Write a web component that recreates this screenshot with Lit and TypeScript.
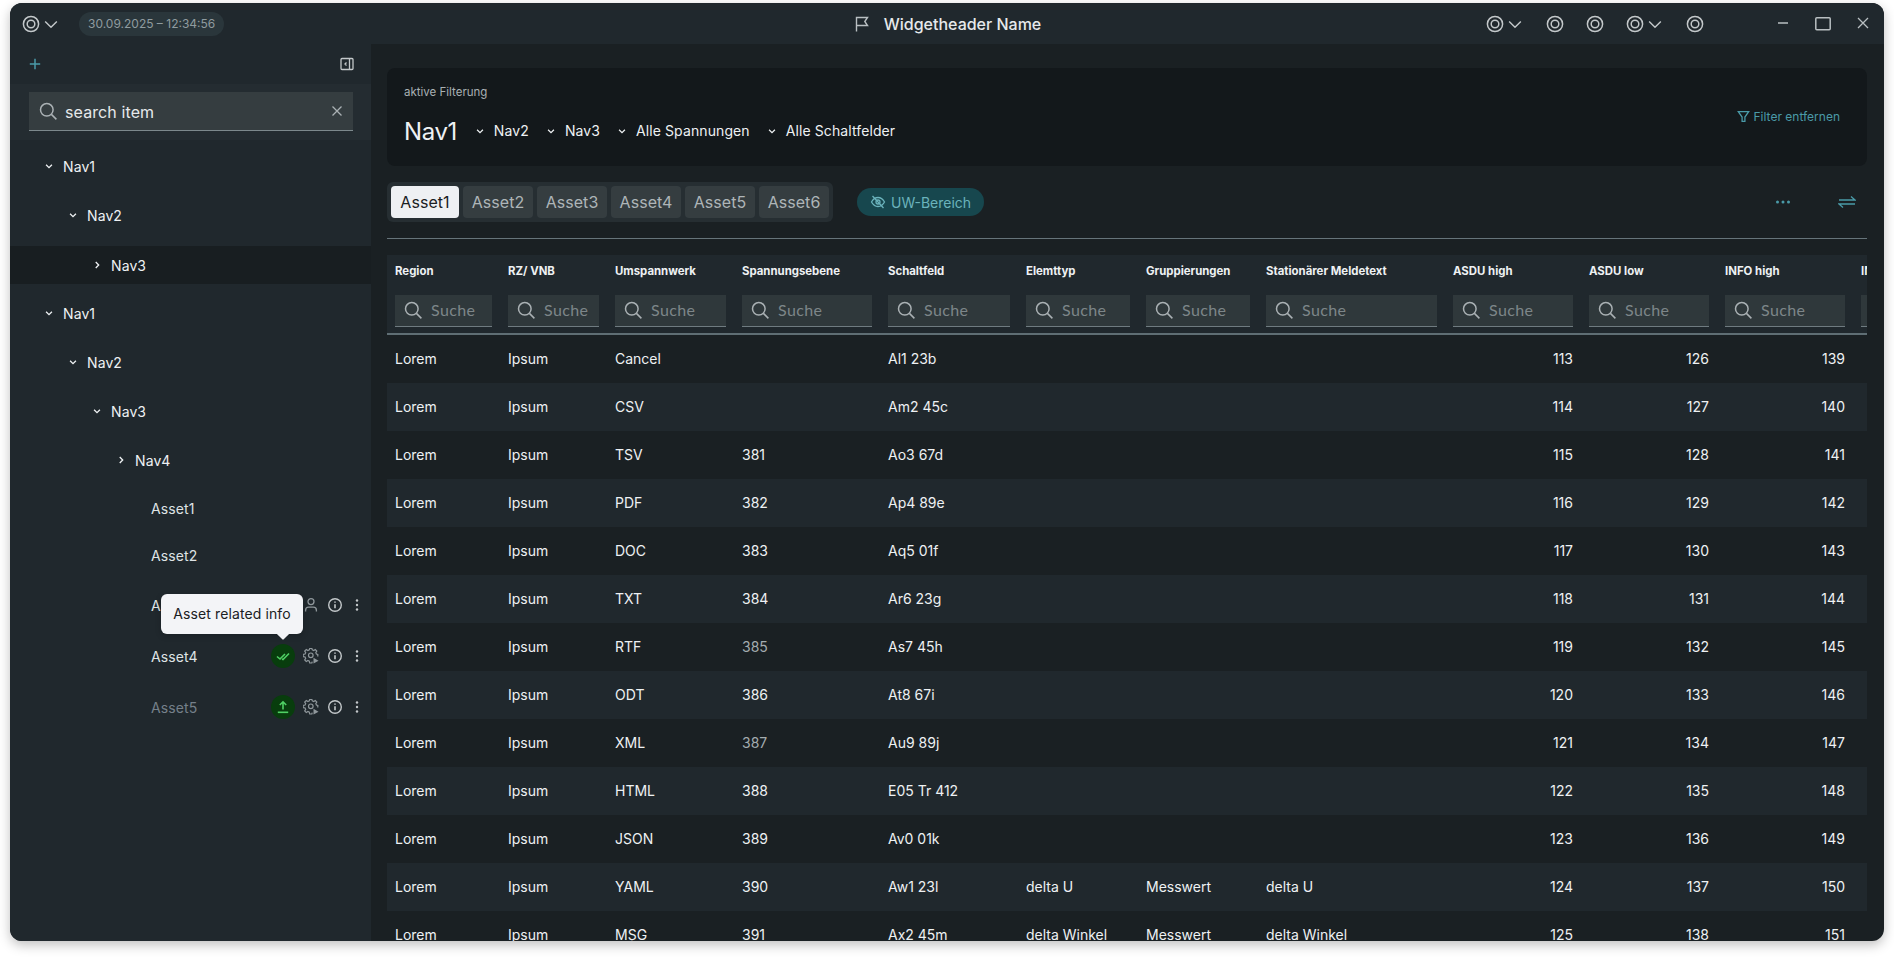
import { LitElement, html, css } from "lit";
import { customElement } from "lit/decorators.js";

const target = (s = 24) => html`<svg class="ico" width=${s} height=${s} viewBox="0 0 24 24" fill="none" stroke="currentColor" stroke-width="1.5"><circle cx="12" cy="12" r="7.6"/><circle cx="12" cy="12" r="3.8"/></svg>`;
const chevD = (s = 12, w = 1.5) => html`<svg class="ico" width=${s} height=${s} viewBox="0 0 12 12" fill="none" stroke="currentColor" stroke-width=${w}><path d="M2.5 4.5 6 8l3.5-3.5"/></svg>`;
const chevR = (s = 12, w = 1.5) => html`<svg class="ico" width=${s} height=${s} viewBox="0 0 12 12" fill="none" stroke="currentColor" stroke-width=${w}><path d="M4.5 2.5 8 6l-3.5 3.5"/></svg>`;
const search = (s = 20) => html`<svg class="ico" width=${s} height=${s} viewBox="0 0 20 20" fill="none" stroke="currentColor" stroke-width="1.5"><circle cx="8.8" cy="8.8" r="6.3"/><path d="m13.4 13.4 5 5"/></svg>`;
const info = html`<svg class="ico" width="16" height="16" viewBox="0 0 16 16" fill="none" stroke="currentColor" stroke-width="1.4"><circle cx="8" cy="8" r="6.3"/><path d="M8 7.2v4" stroke-width="1.6"/><path d="M8 4.4v1.4" stroke-width="1.6"/></svg>`;
const dots = html`<svg class="ico" width="12" height="16" viewBox="0 0 12 16" fill="currentColor"><circle cx="6" cy="3.5" r="1.2"/><circle cx="6" cy="8" r="1.2"/><circle cx="6" cy="12.5" r="1.2"/></svg>`;
const person = html`<svg class="ico" width="16" height="16" viewBox="0 0 16 16" fill="none" stroke="currentColor" stroke-width="1.3"><circle cx="8" cy="4.6" r="3"/><path d="M2.6 14.4v-1.2a3 3 0 0 1 3-3h4.8a3 3 0 0 1 3 3v1.2"/></svg>`;
const gear = html`<svg class="ico" width="16" height="16" viewBox="0 0 16 16" fill="none" stroke="currentColor" stroke-width="1.2"><path d="M9.2 13.6 8.9 15H6.700l-.4-1.900-1.400-.6-1.600 1L1.700 12l1-1.600-.6-1.400L.2 8.600V6.400l1.900-.4.600-1.400-1-1.600L3.300 1.500l1.600 1 1.400-.6.400-1.400h2.200l.4 1.400 1.400.6 1.600-1 1.500 1.500-1 1.600.6 1.400 1.400.4v2"/><circle cx="7.800" cy="7.300" r="2.300"/><path d="M10.500 9.800v5.800l5-2.900z" fill="currentColor" stroke="none"/></svg>`;
const checks = html`<svg class="ico" width="14" height="14" viewBox="0 0 14 14" fill="none" stroke="currentColor" stroke-width="1.6"><path d="m1 7.500 3 2.500 5-5"/><path d="m6 10 1 .5 6-6"/></svg>`;
const upload = html`<svg class="ico" width="14" height="14" viewBox="0 0 14 14" fill="none" stroke="currentColor" stroke-width="1.6"><path d="M7 9.500V2M3.800 5 7 1.800 10.200 5"/><path d="M1.800 12.300h10.400"/></svg>`;
const flag = html`<svg class="ico" width="18" height="18" viewBox="0 0 18 18" fill="none" stroke="currentColor" stroke-width="1.4"><path d="M3.500 16.500V2.500h11l-2.700 4 2.700 4h-11"/></svg>`;
const eyeOff = html`<svg class="ico" width="16" height="16" viewBox="0 0 16 16" fill="none" stroke="currentColor" stroke-width="1.3"><path d="M1.500 8S4 3.500 8 3.500 14.500 8 14.500 8 12 12.500 8 12.500 1.500 8 1.500 8z"/><circle cx="8" cy="8" r="2"/><path d="m2.500 2 11 12"/></svg>`;
const funnel = html`<svg class="ico" width="13" height="13" viewBox="0 0 12 12" fill="none" stroke="currentColor" stroke-width="1.200"><path d="M1.200 1.500h9.600L7.300 6.500v4H4.700v-4z"/></svg>`;

type Tree = { label: string; depth: number; open?: boolean; sel?: boolean };
const tree: Tree[] = [
  { label: "Nav1", depth: 0, open: true },
  { label: "Nav2", depth: 1, open: true },
  { label: "Nav3", depth: 2, sel: true },
  { label: "Nav1", depth: 0, open: true },
  { label: "Nav2", depth: 1, open: true },
  { label: "Nav3", depth: 2, open: true },
  { label: "Nav4", depth: 3 },
];
const cols = [
  ["Region", 113], ["RZ/ VNB", 107], ["Umspannwerk", 127], ["Spannungsebene", 146], ["Schaltfeld", 138],
  ["Elemttyp", 120], ["Gruppierungen", 120], ["Stationärer Meldetext", 187], ["ASDU high", 136], ["ASDU low", 136], ["INFO high", 136], ["INFO low", 136],
] as [string, number][];
const grid = cols.map((c) => c[1] + "px").join(" ");
const types = ["Cancel", "CSV", "TSV", "PDF", "DOC", "TXT", "RTF", "ODT", "XML", "HTML", "JSON", "YAML", "MSG"];
const felder = ["Al1 23b", "Am2 45c", "Ao3 67d", "Ap4 89e", "Aq5 01f", "Ar6 23g", "As7 45h", "At8 67i", "Au9 89j", "E05 Tr 412", "Av0 01k", "Aw1 23l", "Ax2 45m"];
const dimV = new Set([6, 8]);

@customElement("app-root")
export class AppRoot extends LitElement {
  static styles = css`
    :host { display: block; height: 958px; background: #fff; padding: 3px 10px 0; box-sizing: border-box; font-family: Inter, "Liberation Sans", sans-serif; color: #eef1f3; overflow: hidden; }
    * { box-sizing: border-box; }
    .ico { display: block; flex: none; }
    .win { width: 1874px; height: 938px; border-radius: 12px; overflow: hidden; background: #1a2023; display: flex; flex-direction: column; box-shadow: 0 4px 12px rgba(0,0,0,.25); }
    .title { height: 41px; flex: none; background: #20282d; display: grid; grid-template-columns: 1fr auto 1fr; align-items: center; color: #c3c8ca; }
    .tl { display: flex; align-items: center; padding-left: 9px; }
    .tl .chev { margin-left: -2px; }
    .date { margin-left: 18px; height: 24px; padding: 0 9px; border-radius: 12px; background: #2a363b; font-size: 12px; line-height: 24px; color: #8f9b9f; }
    .tc { display: flex; align-items: center; gap: 13px; font-size: 16px; font-weight: 500; color: #e6e9eb; }
    .tc .ico { color: #b9bfc2; }
    .tr { display: flex; align-items: center; justify-content: flex-end; }
    .grp { display: flex; align-items: center; width: 40px; justify-content: center; }
    .grp.wide { width: 60px; justify-content: flex-start; padding-left: 8px; }
    .grp.wide .ico:last-child { margin-left: -2px; }
    .tools { display: flex; gap: 0; margin-left: 48px; margin-right: 1px; }
    .tools button { all: unset; display: flex; width: 40px; justify-content: center; color: #b9bfc2; }
    .body { flex: 1; min-height: 0; display: flex; }
    .side { width: 361px; flex: none; background: #20282d; display: flex; flex-direction: column; }
    .sidetop { height: 40px; flex: none; display: flex; align-items: center; justify-content: space-between; padding: 0 17px 0 19px; color: #4a9aa8; }
    .sidetop .ico:last-child { color: #c3c8ca; }
    .searchband { height: 56px; flex: none; background: #242c31; padding: 8px 18px 9px 19px; }
    .searchbox { height: 39px; background: #353d40; border-bottom: 1px solid #7d898d; display: flex; align-items: center; padding: 0 10px 0 9px; color: #aab1b4; }
    .searchbox span { flex: 1; margin-left: 7px; padding-top: 2px; font-size: 16px; letter-spacing: .1px; color: #e6e9eb; }
    .tree { padding-top: 7px; display: flex; flex-direction: column; gap: 11px; }
    .row { height: 38px; display: flex; align-items: center; gap: 6px; font-size: 14px; font-weight: 400; letter-spacing: .1px; color: #eef1f3; }
    .row.sel { background: #181e21; margin-top: 1px; margin-bottom: -1px; }
    .chevbox { width: 16px; display: flex; justify-content: center; color: #eef1f3; }
    .asset { height: 36px; display: flex; align-items: center; padding-left: 141px; font-size: 14px; font-weight: 400; letter-spacing: .1px; color: #dfe3e5; position: relative; }
    .asset.tall { height: 40px; }
    .asset.first { margin-top: 1px; }
    .asset.off { color: #75808a; }
    .asset .name { flex: 1; }
    .acts { display: flex; align-items: center; color: #8f979b; padding-right: 4px; }
    .badge { width: 24px; height: 24px; border-radius: 50%; background: #083d0d; color: #4fd064; display: flex; align-items: center; justify-content: center; margin-right: 4px; }
    .slot { width: 24px; display: flex; justify-content: center; }
    .slot.i { color: #c3c8ca; }
    .slot.d { color: #c3c8ca; width: 20px; }
    .tip { position: absolute; left: 151px; top: 9px; width: 142px; height: 40px; background: #f3f4f7; color: #1a2023; border-radius: 6px; font-size: 14px; line-height: 40px; text-align: center; z-index: 2; box-shadow: 0 2px 6px rgba(0,0,0,.2); }
    .tip::after { content: ""; position: absolute; left: 117px; bottom: -4px; width: 10px; height: 10px; background: #f3f4f7; transform: rotate(45deg); border-radius: 1px; }
    .main { flex: 1; min-width: 0; padding: 24px 17px 0 16px; display: flex; flex-direction: column; }
    .filter { height: 98px; flex: none; background: #13181b; border-radius: 8px; display: flex; align-items: center; justify-content: space-between; padding: 0 27px 0 17px; }
    .fleft { padding-bottom: 4px; }
    .flabel { font-size: 11.5px; color: #a9b0b3; margin-bottom: 18px; }
    .crumbs { display: flex; align-items: center; font-size: 14px; letter-spacing: .1px; color: #eef1f3; }
    .crumbs b { font-size: 24px; font-weight: 400; letter-spacing: -.4px; margin-right: 18px; }
    .crumb { display: flex; align-items: center; gap: 9px; margin-right: 17px; }
    .crumb span { position: relative; top: -1px; }
    .remove { display: flex; align-items: center; gap: 4px; padding-bottom: 2px; font-size: 12px; color: #4a9aa8; }
    .bar { flex: none; display: flex; align-items: center; padding: 16px 0; border-bottom: 1px solid #66747a; height: 73px; }
    .tabs { display: flex; gap: 4px; padding: 4px; height: 40px; background: #262e32; border-radius: 6px; }
    .tab { width: 70px; height: 32px; background: #353d40; border-radius: 4px; display: flex; align-items: center; justify-content: center; font-size: 16px; letter-spacing: .05px; color: #aeb5b8; }
    .tab.on { width: 68px; background: #eef0f3; color: #1a2023; }
    .uw { margin-left: 24px; height: 28px; padding: 0 13px 0 13px; background: #17474e; border-radius: 14px; display: flex; align-items: center; gap: 5px; font-size: 14px; color: #6bb3bc; }
    .uw .ico { color: #6bb3bc; }
    .spacer { flex: 1; }
    .bar .acts2 { display: flex; align-items: center; gap: 47px; padding-right: 11px; color: #4a9aa8; }
    .tablewrap { flex: 1; min-height: 0; margin-top: 16px; overflow: hidden; }
    .grid { display: grid; }
    .head { background: #20282d; height: 78px; }
    .hcell { padding: 0 8px; overflow: hidden; }
    .hlabel { height: 40px; line-height: 33px; font-size: 11.4px; font-weight: 700; color: #eef1f3; white-space: nowrap; }
    .hinput { height: 32px; background: #2f383b; border-bottom: 1px solid #6f7b80; display: flex; align-items: center; padding: 0 8px 2px; color: #aab1b4; }
    .hinput span { margin-left: 8px; font-size: 16px; letter-spacing: .4px; font-family: Lato, Inter, sans-serif; color: #7d8689; }
    .hline { height: 2px; background: #5f6e74; }
    .tr0 { height: 48px; align-items: center; padding-bottom: 2px; font-size: 14px; color: #eef1f3; }
    .tr0.alt { background: #20282d; }
    .cell { padding: 0 8px; white-space: nowrap; overflow: hidden; }
    .cell.num { text-align: right; }
    .cell.dim { color: #a4acaf; }
  `;

  private treeRow(t: Tree) {
    return html`<div class="row ${t.sel ? "sel" : ""}" style="padding-left:${31 + t.depth * 24}px">
      <span class="chevbox">${t.open ? chevD(10, 1.6) : chevR(10, 1.6)}</span><span>${t.label}</span>
    </div>`;
  }

  private tableRow(i: number) {
    const cells = [
      "Lorem", "Ipsum", types[i], i >= 2 ? String(379 + i) : "", felder[i],
      i === 11 ? "delta U" : i === 12 ? "delta Winkel" : "",
      i >= 11 ? "Messwert" : "",
      i === 11 ? "delta U" : i === 12 ? "delta Winkel" : "",
      String(113 + i), String(126 + i), String(139 + i), "",
    ];
    return html`<div class="grid tr0 ${i % 2 ? "alt" : ""}" style="grid-template-columns:${grid}">
      ${cells.map((c, k) => html`<div class="cell ${k >= 8 ? "num" : ""} ${k === 3 && dimV.has(i) ? "dim" : ""}">${c}</div>`)}
    </div>`;
  }

  render() {
    return html`<div class="win">
      <div class="title">
        <div class="tl">${target()}<span class="chev">${chevD(20, 0.85)}</span><span class="date">30.09.2025 – 12:34:56</span></div>
        <div class="tc">${flag}<span>Widgetheader Name</span></div>
        <div class="tr">
          <div class="grp wide">${target()}${chevD(20, 0.85)}</div>
          <div class="grp">${target()}</div>
          <div class="grp">${target()}</div>
          <div class="grp wide">${target()}${chevD(20, 0.85)}</div>
          <div class="grp">${target()}</div>
          <div class="tools">
            <button><svg class="ico" width="16" height="16" viewBox="0 0 16 16" stroke="currentColor" stroke-width="1.500"><path d="M3 8h10"/></svg></button>
            <button><svg class="ico" width="18" height="18" viewBox="0 0 18 18" fill="none" stroke="currentColor" stroke-width="1.500"><rect x="1.800" y="2.800" width="14.400" height="12" rx="1"/></svg></button>
            <button><svg class="ico" width="16" height="16" viewBox="0 0 16 16" fill="none" stroke="currentColor" stroke-width="1.300"><path d="m3 3 10 10M13 3 3 13"/></svg></button>
          </div>
        </div>
      </div>
      <div class="body">
        <aside class="side">
          <div class="sidetop">
            <svg class="ico" width="12" height="12" viewBox="0 0 12 12" fill="none" stroke="currentColor" stroke-width="1.500"><path d="M6 .8v10.400M.8 6h10.400"/></svg>
            <svg class="ico" width="14" height="14" viewBox="0 0 14 14" fill="none" stroke="currentColor" stroke-width="1.300"><rect x="1" y="1.500" width="12" height="11" rx="1"/><path d="M9.500 1.500v11"/><path d="M6.500 5.500 5 7l1.500 1.500"/></svg>
          </div>
          <div class="searchband">
            <div class="searchbox">${search()}<span>search item</span>
              <svg class="ico" width="12" height="12" viewBox="0 0 12 12" fill="none" stroke="currentColor" stroke-width="1.300"><path d="m1.500 1.500 9 9M10.500 1.500l-9 9"/></svg>
            </div>
          </div>
          <div class="tree">
            ${tree.map((t) => this.treeRow(t))}
            <div class="asset">Asset1</div>
            <div class="asset">Asset2</div>
            <div class="asset tall first"><span class="name">Asset3</span>
              <div class="acts"><span class="slot">${person}</span><span class="slot i">${info}</span><span class="slot d">${dots}</span></div>
              <div class="tip">Asset related info</div>
            </div>
            <div class="asset tall"><span class="name">Asset4</span>
              <div class="acts"><span class="badge">${checks}</span><span class="slot">${gear}</span><span class="slot i">${info}</span><span class="slot d">${dots}</span></div>
            </div>
            <div class="asset tall off"><span class="name">Asset5</span>
              <div class="acts"><span class="badge">${upload}</span><span class="slot">${gear}</span><span class="slot i">${info}</span><span class="slot d">${dots}</span></div>
            </div>
          </div>
        </aside>
        <main class="main">
          <section class="filter">
            <div class="fleft">
              <div class="flabel">aktive Filterung</div>
              <div class="crumbs"><b>Nav1</b>
                ${["Nav2", "Nav3", "Alle Spannungen", "Alle Schaltfelder"].map((c) => html`<span class="crumb">${chevD(10, 1.5)}<span>${c}</span></span>`)}
              </div>
            </div>
            <div class="remove">${funnel}<span>Filter entfernen</span></div>
          </section>
          <div class="bar">
            <div class="tabs">
              ${[1, 2, 3, 4, 5, 6].map((n) => html`<div class="tab ${n === 1 ? "on" : ""}">Asset${n}</div>`)}
            </div>
            <div class="uw">${eyeOff}<span>UW-Bereich</span></div>
            <div class="spacer"></div>
            <div class="acts2">
              <svg class="ico" width="16" height="16" viewBox="0 0 16 16" fill="currentColor"><circle cx="2.500" cy="8" r="1.500"/><circle cx="8" cy="8" r="1.500"/><circle cx="13.500" cy="8" r="1.500"/></svg>
              <svg class="ico" width="18" height="18" viewBox="0 0 18 18" fill="none" stroke="currentColor" stroke-width="1.300"><path d="M1 7h16l-4-3.500M17 11H1l4 3.500"/></svg>
            </div>
          </div>
          <div class="tablewrap">
            <div class="grid head" style="grid-template-columns:${grid}">
              ${cols.map((c) => html`<div class="hcell"><div class="hlabel">${c[0]}</div><div class="hinput">${search(20)}<span>Suche</span></div></div>`)}
            </div>
            <div class="hline"></div>
            ${types.map((_, i) => this.tableRow(i))}
          </div>
        </main>
      </div>
    </div>`;
  }
}
